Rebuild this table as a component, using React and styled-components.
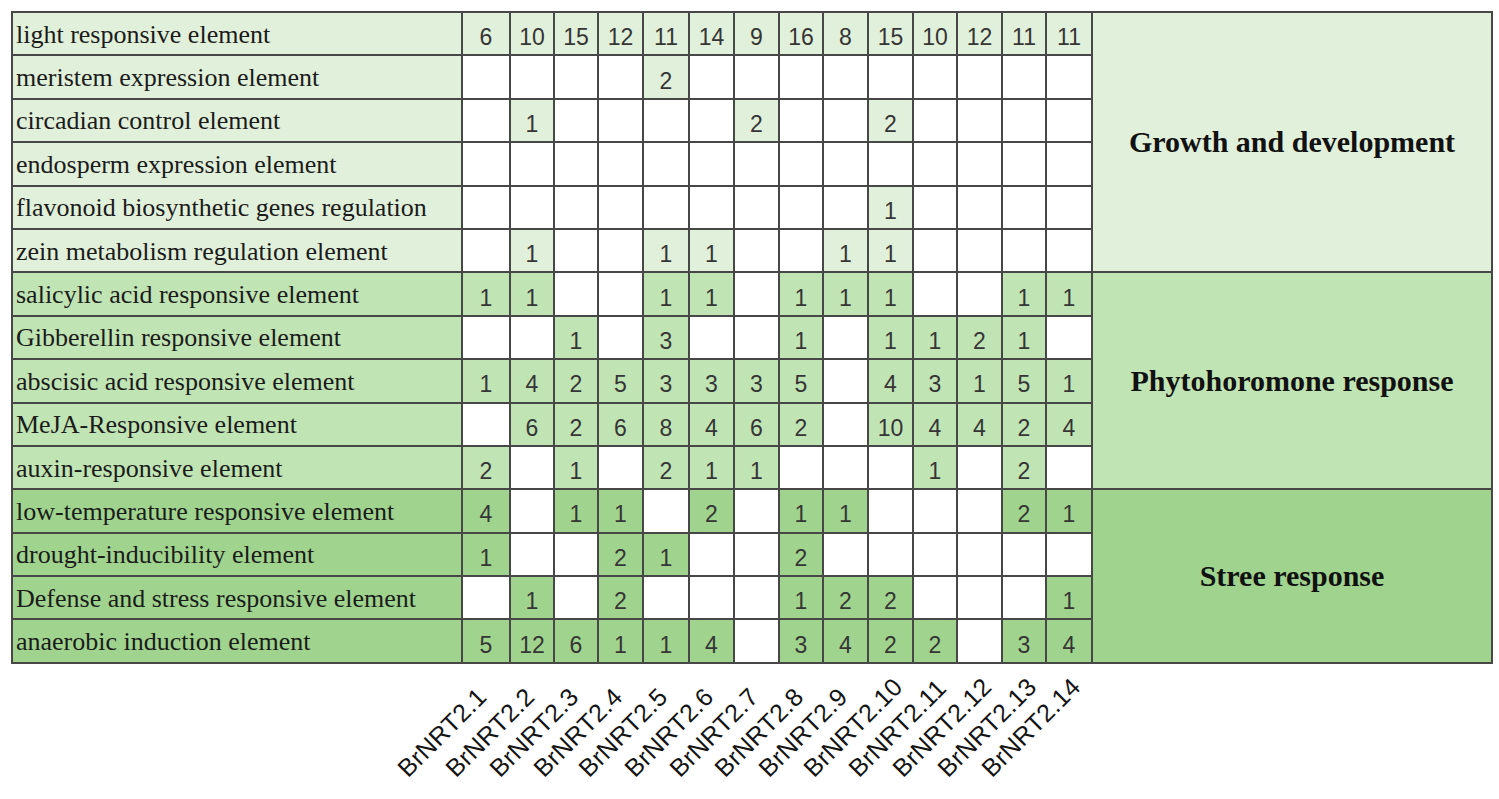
import React from 'react'
import styled, { createGlobalStyle } from 'styled-components'

const GlobalStyle = createGlobalStyle`
  html, body {
    margin: 0;
    background: #fff;
    overflow: hidden;
  }
  body {
    font-family: "Liberation Serif", serif;
  }
`

// distance between grid lines for the 14 gene columns
const colSpacing = [48, 44, 44, 45, 46, 45, 45, 44, 45, 45, 44, 45, 44, 46]
const genes = colSpacing.map((_, i) => `BrNRT2.${i + 1}`)

const groups = [
  {
    name: 'Growth and development',
    tone: '#e1f0da',
    rows: [
      ['light responsive element', [6, 10, 15, 12, 11, 14, 9, 16, 8, 15, 10, 12, 11, 11]],
      ['meristem expression element', [0, 0, 0, 0, 2, 0, 0, 0, 0, 0, 0, 0, 0, 0]],
      ['circadian control element', [0, 1, 0, 0, 0, 0, 2, 0, 0, 2, 0, 0, 0, 0]],
      ['endosperm expression element', [0, 0, 0, 0, 0, 0, 0, 0, 0, 0, 0, 0, 0, 0]],
      ['flavonoid biosynthetic genes regulation', [0, 0, 0, 0, 0, 0, 0, 0, 0, 1, 0, 0, 0, 0]],
      ['zein metabolism regulation element', [0, 1, 0, 0, 1, 1, 0, 0, 1, 1, 0, 0, 0, 0]],
    ],
  },
  {
    name: 'Phytohoromone response',
    tone: '#c1e4b5',
    rows: [
      ['salicylic acid responsive element', [1, 1, 0, 0, 1, 1, 0, 1, 1, 1, 0, 0, 1, 1]],
      ['Gibberellin responsive element', [0, 0, 1, 0, 3, 0, 0, 1, 0, 1, 1, 2, 1, 0]],
      ['abscisic acid responsive element', [1, 4, 2, 5, 3, 3, 3, 5, 0, 4, 3, 1, 5, 1]],
      ['MeJA-Responsive element', [0, 6, 2, 6, 8, 4, 6, 2, 0, 10, 4, 4, 2, 4]],
      ['auxin-responsive element', [2, 0, 1, 0, 2, 1, 1, 0, 0, 0, 1, 0, 2, 0]],
    ],
  },
  {
    name: 'Stree response',
    tone: '#a0d48e',
    rows: [
      ['low-temperature responsive element', [4, 0, 1, 1, 0, 2, 0, 1, 1, 0, 0, 0, 2, 1]],
      ['drought-inducibility element', [1, 0, 0, 2, 1, 0, 0, 2, 0, 0, 0, 0, 0, 0]],
      ['Defense and stress responsive element', [0, 1, 0, 2, 0, 0, 0, 1, 2, 2, 0, 0, 0, 1]],
      ['anaerobic induction element', [5, 12, 6, 1, 1, 4, 0, 3, 4, 2, 2, 0, 3, 4]],
    ],
  },
]

const Page = styled.div`
  padding: 11px 0 0 11px;
`

const Table = styled.div`
  display: grid;
  width: max-content;
  grid-template-columns: 448px ${colSpacing.map(w => `${w - 2}px`).join(' ')} 398px;
  grid-auto-rows: 41.4px;
  gap: 2px;
  padding: 2px;
  background: #474747;
`

const RowLabel = styled.div`
  display: flex;
  align-items: center;
  padding: 2px 0 0 3px;
  background: ${p => p.$tone};
  font: 26px/1 "Liberation Serif", serif;
  color: #1b1b1b;
  white-space: nowrap;
`

const Count = styled.div`
  display: flex;
  align-items: center;
  justify-content: center;
  padding-top: 8px;
  background: ${p => (p.$tone ? p.$tone : '#fff')};
  font: 23px/1 "Liberation Sans", sans-serif;
  color: #353535;
`

const GroupCell = styled.div`
  grid-column: 16;
  grid-row: ${p => p.$start} / span ${p => p.$span};
  display: flex;
  align-items: center;
  justify-content: center;
  background: ${p => p.$tone};
  font: bold 30px/1 "Liberation Serif", serif;
  color: #111;
`

const Axis = styled.div`
  display: flex;
  align-items: flex-end;
  box-sizing: border-box;
  height: 135px;
  padding: 0 0 14px 451px;
`

const Tick = styled.div`
  flex: 0 0 ${p => p.$w}px;
  min-width: 0;
  display: flex;
  align-items: flex-end;
`

const TickText = styled.span`
  flex: none;
  white-space: nowrap;
  font: 25px/1 "Liberation Sans", sans-serif;
  letter-spacing: 0.3px;
  color: #141414;
  transform-origin: left center;
  transform: translateX(-60px) rotate(-45deg);
`

export default function App() {
  let rowIndex = 1
  return (
    <Page>
      <GlobalStyle />
      <Table>
        {groups.map(group => {
          const start = rowIndex
          rowIndex += group.rows.length
          return (
            <React.Fragment key={group.name}>
              <GroupCell $start={start} $span={group.rows.length} $tone={group.tone}>
                {group.name}
              </GroupCell>
              {group.rows.map(([label, counts]) => (
                <React.Fragment key={label}>
                  <RowLabel $tone={group.tone}>{label}</RowLabel>
                  {counts.map((n, i) => (
                    <Count key={i} $tone={n ? group.tone : null}>
                      {n || ''}
                    </Count>
                  ))}
                </React.Fragment>
              ))}
            </React.Fragment>
          )
        })}
      </Table>
      <Axis>
        {genes.map((g, i) => (
          <Tick key={g} $w={colSpacing[i]}>
            <TickText>{g}</TickText>
          </Tick>
        ))}
      </Axis>
    </Page>
  )
}
